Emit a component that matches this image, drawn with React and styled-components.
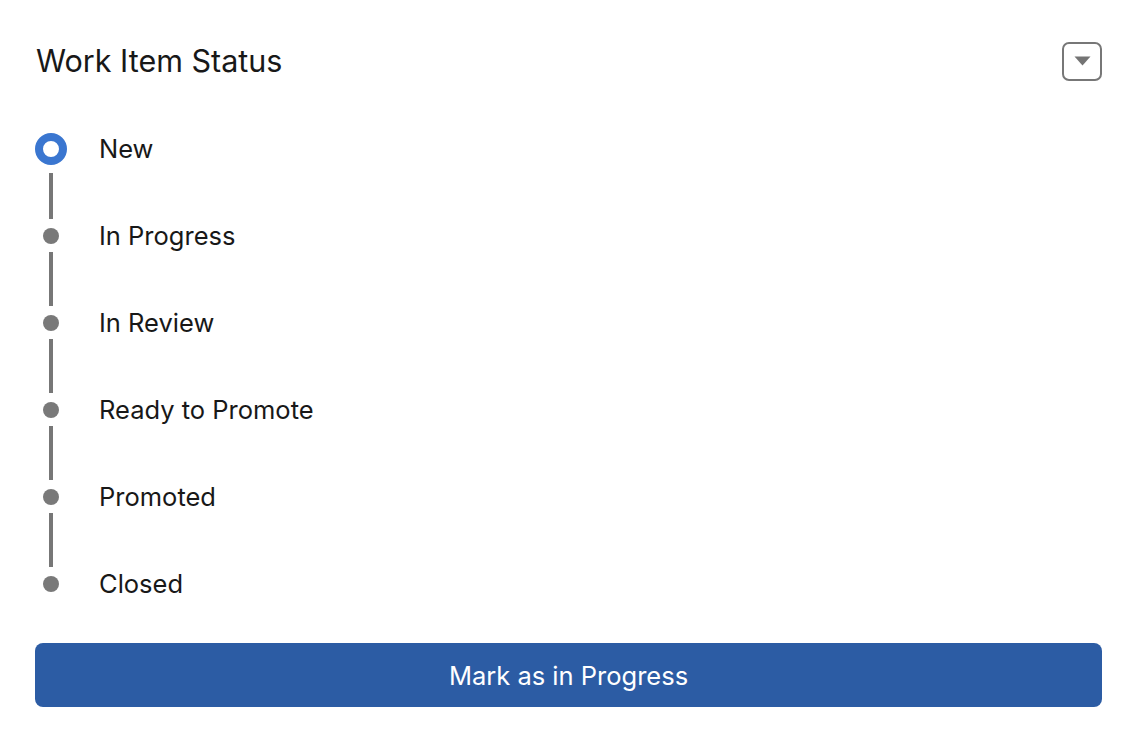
import React from 'react';
import { styled, createGlobalStyle } from 'styled-components';

const steps = ['New', 'In Progress', 'In Review', 'Ready to Promote', 'Promoted', 'Closed'];

function App() {
  const current = 0;

  return (
    <>
      <GlobalStyle />
      <StCard>
        <StHeader>
          <StTitle>Work Item Status</StTitle>
          <StMenuButton aria-label="Show menu">
            <svg width="17" height="10" viewBox="0 0 17 10">
              <path d="M0.5 0.5 H16.5 L8.5 9.5 Z" fill="#747474" />
            </svg>
          </StMenuButton>
        </StHeader>

        <StPath>
          {steps.map((label, i) => (
            <StStep key={label} $last={i === steps.length - 1}>
              <StTrack>
                <StSlot>
                  <StMarker $active={i === current} />
                </StSlot>
                {i < steps.length - 1 && <StConnector $active={i === current} />}
              </StTrack>
              <StLabel>{label}</StLabel>
            </StStep>
          ))}
        </StPath>

        <StAction>Mark as in Progress</StAction>
      </StCard>
    </>
  );
}

export default App;

const GlobalStyle = createGlobalStyle`
  body {
    margin: 0;
    background: #ffffff;
    font-family: Inter, 'Noto Sans', sans-serif;
    color: #181818;
  }
`;

const StCard = styled.div`
  display: flex;
  flex-direction: column;
  padding: 42px 25px 36px 35px;
`;

const StHeader = styled.div`
  display: flex;
  align-items: center;
  justify-content: space-between;
  height: 39px;
`;

const StTitle = styled.h1`
  margin: -3px 0 0 1px;
  font-size: 30.5px;
  font-weight: 400;
  color: #181818;
`;

const StMenuButton = styled.button`
  display: flex;
  align-items: center;
  justify-content: center;
  width: 40px;
  height: 39px;
  padding: 0 0 1px;
  border: 2px solid #777777;
  border-radius: 7px;
  background: #ffffff;
  cursor: pointer;
`;

const StPath = styled.div`
  display: flex;
  flex-direction: column;
  margin-top: 52px;
`;

const StStep = styled.div`
  display: grid;
  grid-template-columns: 32px 1fr;
  column-gap: 32px;
  height: ${({ $last }) => ($last ? '32px' : '87px')};
`;

const StTrack = styled.div`
  display: flex;
  flex-direction: column;
  align-items: center;
`;

const StSlot = styled.div`
  display: flex;
  align-items: center;
  justify-content: center;
  width: 32px;
  height: 32px;
  flex: none;
`;

const StMarker = styled.span`
  box-sizing: border-box;
  width: ${({ $active }) => ($active ? '32px' : '16px')};
  height: ${({ $active }) => ($active ? '32px' : '16px')};
  border-radius: 50%;
  background: ${({ $active }) => ($active ? '#ffffff' : '#797979')};
  border: ${({ $active }) => ($active ? '8.5px solid #3a76d0' : 'none')};
`;

const StConnector = styled.span`
  flex: 1;
  width: 4px;
  margin-top: ${({ $active }) => ($active ? '8px' : '0')};
  margin-bottom: 1px;
  background: #777777;
`;

const StLabel = styled.div`
  line-height: 32px;
  font-size: 25.5px;
  color: #181818;
`;

const StAction = styled.button`
  margin-top: 43px;
  height: 64px;
  border: none;
  border-radius: 8px;
  background: #2c5ca4;
  color: #ffffff;
  font-family: Inter, 'Noto Sans', sans-serif;
  font-size: 25.5px;
  cursor: pointer;
`;
